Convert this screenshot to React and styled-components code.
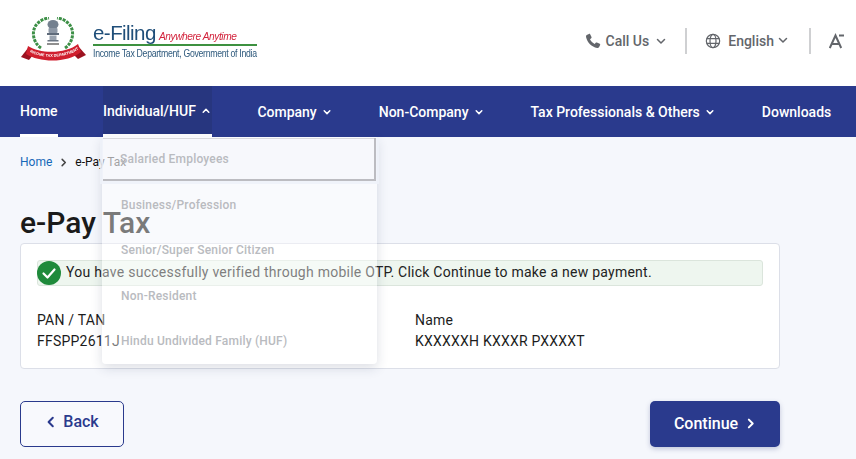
import React from "react";
import styled, { createGlobalStyle } from "styled-components";

const Global = createGlobalStyle`
  html, body { margin: 0; padding: 0; background: #f5f7fc; }
  body { font-family: Roboto, "Liberation Sans", sans-serif; width: 856px; height: 459px; overflow: hidden; }
  * { box-sizing: border-box; }
`;

const Header = styled.header`
  height: 86px; background: #fff; display: flex; align-items: center; justify-content: space-between;
  padding: 0 12px 6px 20px;
`;
const Logo = styled.div`
  display: flex; align-items: center; gap: 6px; filter: blur(0.25px);
`;
const LogoText = styled.div`display: flex; flex-direction: column; width: 165px; margin-top: 2px;`;
const BrandRow = styled.div`display: flex; align-items: baseline; height: 21px;`;
const Brand = styled.span`font: 400 20.5px/21px "Liberation Sans", sans-serif; color: #1f4e79; letter-spacing: -0.55px;`;
const Tagline = styled.span`
  font: italic 400 11.5px/21px "Liberation Sans", sans-serif; color: #d2233c; white-space: nowrap; margin-left: 3px;
  letter-spacing: -0.5px; transform: scaleX(0.885); transform-origin: left center;
`;
const GreenRule = styled.div`height: 2px; background: #3d9140; margin: 1px 0 2px; width: 164px;`;
const DeptName = styled.div`
  font: 400 10px/12px "Liberation Sans", sans-serif; color: #2f5a7d; white-space: nowrap; letter-spacing: -0.33px;
  transform: scaleX(0.87); transform-origin: left center;
`;

const Actions = styled.div`display: flex; align-items: center; color: #5f6368; margin-top: 2px;`;
const Action = styled.div`display: flex; align-items: center; font-size: 14px; font-weight: 500; color: #63666b; height: 26px; gap: ${p => p.$gap || 5}px;`;
const ActionChevron = styled.span`display: flex; margin-left: ${p => p.$left}px; margin-top: ${p => p.$top || 0}px;`;
const Divider = styled.div`width: 2px; height: 26px; background: #cfd0d2; margin: 0 ${p => p.$right}px 0 ${p => p.$left}px;`;

const Nav = styled.nav`
  height: 51px; background: #2a3a8d; display: flex; align-items: stretch; gap: 48px; padding: 0 25px 0 20px; position: relative;
`;
const NavItem = styled.div`
  position: relative; display: flex; align-items: center; gap: 6px; color: #fff; font-size: 14px; font-weight: 500; white-space: nowrap;
  border-bottom: ${p => (p.$raised ? "3px solid #fff" : "none")};
  background: ${p => (p.$open ? "#27367f" : "transparent")};
  padding-top: ${p => (p.$raised ? 1 : 0)}px;
  padding-right: ${p => (p.$open ? 2 : 0)}px;
  margin-right: ${p => (p.$open || p.$home ? -2.5 : 0)}px;
`;
const Menu = styled.div`
  position: absolute; left: -1px; top: 51px; width: 275px; height: 227px; background: rgba(255,255,255,.42);
  box-shadow: 0 4px 12px rgba(40,50,90,.16); border-radius: 0 0 4px 4px; padding-top: 1px; z-index: 5;
  color: #b9bbc0; font-size: 12px; font-weight: 500; letter-spacing: 0.2px;
`;
const MenuFirst = styled.div`
  margin: 0 0 -2px -2px; width: 279px; height: 46px; padding: 0 0 1px 17px; display: flex; align-items: center;
  border-style: solid; border-width: 0 3px 3px 3px; border-color: #eef1f9cc;
  background: rgba(244,244,249,.35);
  box-shadow: inset -2px -2px 0 #bcbcc1, inset 0 1px 0 #d8d8dc;
`;
const MenuItem = styled.div`height: 45.5px; padding-left: 19px; display: flex; align-items: center;`;

const Main = styled.main`padding: 0 20px 0 20px; width: 800px;`;
const Crumbs = styled.div`height: 49px; display: flex; align-items: center; font-size: 12px; gap: 7px; color: #111; padding-top: 1px;`;
const CrumbLink = styled.span`color: #1668b8;`;
const Title = styled.h1`margin: 19px 0 0; font-size: 30px; line-height: 36px; font-weight: 500; color: #1a1a1a;`;
const Card = styled.section`
  margin-top: 2px; height: 126px; background: #fff; border: 1px solid #dcdfe8; border-radius: 4px; padding: 16px 16px 0;
`;
const Alert = styled.div`
  height: 26px; width: 726px; background: #eef6ef; border: 1px solid #dbe5dc; border-radius: 3px; display: flex; align-items: center; gap: 5px;
  font-size: 14px; color: #222; letter-spacing: 0.25px; white-space: nowrap; line-height: 22px;
`;
const AlertText = styled.span`margin-top: -2px;`;
const Fields = styled.div`display: grid; grid-template-columns: 378px 1fr; margin-top: 24px;`;
const Field = styled.div`font-size: 14px; line-height: 21px; color: #1c1c1c; letter-spacing: 0.22px;`;
const Buttons = styled.div`display: flex; justify-content: space-between; margin-top: 32px;`;
const BackButton = styled.button`
  width: 104px; height: 46px; border: 1px solid #2a3a8d; border-radius: 5px; background: #f8f9fd; color: #2a3a8d;
  font: 500 16px Roboto, sans-serif; display: flex; align-items: center; justify-content: center; gap: 6px; padding: 0 0 5px;
`;
const ContinueButton = styled.button`
  width: 130px; height: 46px; border: 0; border-radius: 5px; background: #2a3a8d; color: #fff;
  box-shadow: 0 2px 5px rgba(40,50,120,.25);
  font: 500 16px Roboto, sans-serif; display: flex; align-items: center; justify-content: center; gap: 7px; padding: 0 0 2px;
`;

const Chevron = ({ size = 8, dir = "down", color = "currentColor", w = 1.5 }) => {
  const d = { down: "M1.5 3.5 5 7l3.5-3.5", up: "M1.5 6.5 5 3l3.5 3.5", left: "M6.5 1.5 3 5l3.5 3.5", right: "M3.5 1.5 7 5 3.5 8.5" }[dir];
  return (
    <svg width={size} height={size} viewBox="0 0 10 10" fill="none" stroke={color} strokeWidth={w * 10 / size} strokeLinecap="round" strokeLinejoin="round" style={{ flex: "none" }}>
      <path d={d} />
    </svg>
  );
};

const Emblem = () => (
  <svg width="67" height="46" viewBox="0 0 67 46" style={{ flex: "none" }}>
    <g fill="none" stroke="#3c8f46" strokeWidth="3" strokeDasharray="3 1">
      <path d="M21 31C12 25 11 12 18 6 21 3 25 1.500 29 1" />
      <path d="M45 31C54 25 55 12 48 6 45 3 41 1.500 37 1" />
    </g>
    <g fill="#74808f">
      <ellipse cx="33" cy="7.500" rx="5.500" ry="4.500" />
      <rect x="28.500" y="11" width="9" height="5" rx="1" fill="#8d97a5" />
      <rect x="27" y="16" width="12" height="2" fill="#5f6b7a" />
      <rect x="29.500" y="18.500" width="7" height="4.500" fill="#9aa3af" />
      <rect x="27.500" y="23" width="11" height="1.500" fill="#6a7583" />
    </g>
    <rect x="27" y="26" width="12" height="2" fill="#444" opacity=".6" />
    <path d="M1 40 8 31 13 38 9 43Z" fill="#9c1220" />
    <path d="M66 38 58 29 53 37 58 42Z" fill="#9c1220" />
    <path d="M8 29C20 37 46 37 58 27L61 35C48 46 20 46 6 37Z" fill="#d01f2e" />
    <path id="rib" d="M8 34C20 42 46 42 59 32" fill="none" />
    <text fontFamily="Liberation Sans, sans-serif" fontSize="3.800" fontWeight="700" fill="#fff">
      <textPath href="#rib" startOffset="4%">INCOME TAX DEPARTMENT</textPath>
    </text>
  </svg>
);

const Phone = () => (
  <svg width="18" height="18" viewBox="0 0 24 24" fill="#63666b" style={{ marginLeft: -1 }}><path d="M6.600 2.500 3.600 4C2.800 4.500 2.500 5.500 2.700 6.500 4.500 14 10 19.500 17.500 21.300c1 .2 2-.1 2.500-.9l1.500-3c.3-.6.100-1.300-.5-1.600l-3.800-1.800c-.5-.3-1.200-.1-1.600.4l-1.300 1.600c-2.800-1.300-5-3.500-6.300-6.300l1.600-1.300c.5-.4.700-1.100.4-1.600L8.200 3c-.3-.6-1-.8-1.600-.5Z" /></svg>
);
const Globe = () => (
  <svg width="16" height="16" viewBox="0 0 24 24" fill="none" stroke="#63666b" strokeWidth="1.800"><circle cx="12" cy="12" r="10" /><ellipse cx="12" cy="12" rx="4.500" ry="10" /><path d="M2.500 8.500h19M2.500 15.500h19" /></svg>
);
const FontSize = () => (
  <svg width="15" height="16" viewBox="0 0 15 16" fill="none" stroke="#63666b" strokeWidth="2"><path d="M.8 15 6.500 2.500 12.200 15M3 11h7" /><path d="M10 2.500h5" /></svg>
);
const Check = () => (
  <svg width="24" height="24" viewBox="0 0 24 24" style={{ flex: "none", marginLeft: -1 }}><circle cx="12" cy="12" r="12" fill="#1f8a3b" /><path d="M6.500 12.500 10.500 16.500 17.500 8.500" fill="none" stroke="#fff" strokeWidth="2.200" strokeLinecap="round" strokeLinejoin="round" /></svg>
);

const menuItems = ["Business/Profession", "Senior/Super Senior Citizen", "Non-Resident", "Hindu Undivided Family (HUF)"];

export default function App() {
  return (
    <>
      <Global />
      <Header>
        <Logo>
          <Emblem />
          <LogoText>
            <BrandRow>
              <Brand>e-Filing</Brand>
              <Tagline>Anywhere Anytime</Tagline>
            </BrandRow>
            <GreenRule />
            <DeptName>Income Tax Department, Government of India</DeptName>
          </LogoText>
        </Logo>
        <Actions>
          <Action $gap={4}><Phone />Call Us<ActionChevron $left={3}><Chevron size={10} /></ActionChevron></Action>
          <Divider $left={19} $right={18} />
          <Action $gap={7}><Globe />English<ActionChevron $left={-3} $top={-3}><Chevron size={10} /></ActionChevron></Action>
          <Divider $left={21} $right={18} />
          <Action><FontSize /></Action>
        </Actions>
      </Header>
      <Nav>
        <NavItem $raised $home>Home</NavItem>
        <NavItem $raised $open>
          Individual/HUF <Chevron dir="up" />
          <Menu>
            <MenuFirst>Salaried Employees</MenuFirst>
            {menuItems.map(m => <MenuItem key={m}>{m}</MenuItem>)}
          </Menu>
        </NavItem>
        <NavItem>Company <Chevron /></NavItem>
        <NavItem>Non-Company <Chevron /></NavItem>
        <NavItem>Tax Professionals &amp; Others <Chevron /></NavItem>
        <NavItem>Downloads</NavItem>
      </Nav>
      <Main>
        <Crumbs><CrumbLink>Home</CrumbLink><Chevron size={9} dir="right" color="#444" /><span>e-Pay Tax</span></Crumbs>
        <Title>e-Pay Tax</Title>
        <Card>
          <Alert><Check /><AlertText>You have successfully verified through mobile OTP. Click Continue to make a new payment.</AlertText></Alert>
          <Fields>
            <Field>PAN / TAN<br />FFSPP2611J</Field>
            <Field>Name<br />KXXXXXH KXXXR PXXXXT</Field>
          </Fields>
        </Card>
        <Buttons>
          <BackButton><Chevron size={12} dir="left" w={2} />Back</BackButton>
          <ContinueButton>Continue<Chevron size={11} dir="right" w={2} /></ContinueButton>
        </Buttons>
      </Main>
    </>
  );
}
